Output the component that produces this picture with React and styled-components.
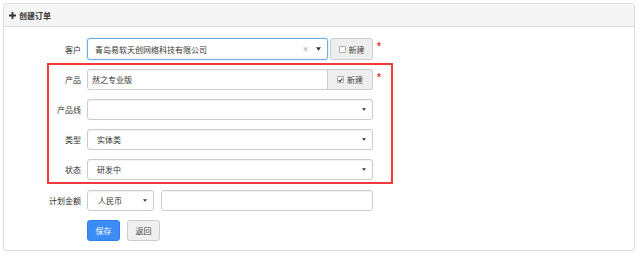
import React from "react";
import styled, { createGlobalStyle } from "styled-components";

const Global = createGlobalStyle`
  html, body { margin: 0; padding: 0; background: #fff; }
  body {
    font-family: "Noto Sans CJK SC", "Noto Sans", sans-serif;
    font-size: 8px;
    color: #333;
  }
  * { box-sizing: border-box; }
`;

const Page = styled.div`
  padding: 3px;
`;

const Panel = styled.div`
  width: 632px;
  height: 248px;
  border: 1px solid #dddddd;
  border-radius: 3px;
  background: #fff;
`;

const Header = styled.div`
  height: 23px;
  display: flex;
  align-items: center;
  gap: 3px;
  padding-left: 5px;
  background: #f5f5f5;
  border-bottom: 1px solid #dddddd;
  font-weight: bold;
  color: #333;
`;

const Body = styled.div`
  padding: 11px 0 10px 43px;
  display: flex;
  flex-direction: column;
`;

const Row = styled.div`
  display: flex;
  align-items: center;
  height: ${(p) => p.$h || 21}px;
  padding-left: ${(p) => (p.$outside ? 2 : 0)}px;
  margin-top: ${(p) => p.$mt || 0}px;
`;

const Group = styled.div`
  margin-top: 3px;
  width: 346px;
  border: 2px solid #f2393b;
  padding: 4px 0 2px 0;
  display: flex;
  flex-direction: column;
  gap: 9px;
`;

const Label = styled.div`
  width: 32px;
  flex-shrink: 0;
  margin-right: 6px;
  text-align: right;
  color: #333;
`;

const Field = styled.div`
  width: ${(p) => p.$w}px;
  height: 100%;
  display: flex;
  align-items: center;
  justify-content: space-between;
  padding: 0 ${(p) => p.$pr || 6}px 0 ${(p) => p.$pl || 9}px;
  border: 1px solid ${(p) => (p.$focus ? "#66afe9" : "#cccccc")};
  border-radius: ${(p) => p.$radius || "3px"};
  background: #fff;
  margin-left: ${(p) => p.$ml || 0}px;
  box-shadow: ${(p) =>
    p.$focus ? "0 0 2px rgba(102,175,233,0.6)" : "inset 0 1px 1px rgba(0,0,0,0.05)"};
  color: #333;
`;

const Tools = styled.div`
  display: flex;
  align-items: center;
  gap: 7px;
`;

const Clear = styled.span`
  color: #aaa;
  font-family: "DejaVu Sans", sans-serif;
  font-size: 8px;
`;

const Addon = styled.div`
  width: ${(p) => p.$w}px;
  height: 100%;
  margin-left: ${(p) => p.$ml || 0}px;
  display: flex;
  align-items: center;
  justify-content: center;
  gap: 3px;
  background: #eeeeee;
  border: 1px solid #cccccc;
  border-left: ${(p) => (p.$attached ? "none" : "1px solid #cccccc")};
  border-radius: ${(p) => (p.$attached ? "0 3px 3px 0" : "3px")};
  color: #444;
`;

const Check = styled.span`
  width: 7px;
  height: 7px;
  border: 1px solid #a9a9a9;
  border-radius: 1px;
  background: #fff;
  display: inline-flex;
  align-items: center;
  justify-content: center;
`;

const Star = styled.span`
  color: #e8363a;
  margin-left: 4px;
  align-self: flex-start;
  margin-top: 4px;
  font-family: "Liberation Sans", sans-serif;
  font-size: 10px;
  font-weight: bold;
  line-height: 10px;
`;

const Btn = styled.div`
  width: 33px;
  height: 21px;
  margin-left: ${(p) => p.$ml || 0}px;
  display: flex;
  align-items: center;
  justify-content: center;
  border-radius: 3px;
  border: 1px solid ${(p) => (p.$primary ? "#2f7fe8" : "#cccccc")};
  background: ${(p) => (p.$primary ? "#3d8cf5" : "#f0f0f0")};
  color: ${(p) => (p.$primary ? "#fff" : "#444")};
`;

const Caret = ({ size = 5 }) => (
  <svg width={size} height={size - 1} viewBox="0 0 6 4">
    <path d="M0 0 L6 0 L3 4 Z" fill="#333" />
  </svg>
);

const Tick = () => (
  <svg width="6" height="6" viewBox="0 0 6 6">
    <path d="M0.8 3.2 L2.4 4.8 L5.3 1.2" fill="none" stroke="#333" strokeWidth="1.3" />
  </svg>
);

export default function App() {
  return (
    <>
      <Global />
      <Page>
        <Panel>
          <Header>
            <svg width="7" height="7" viewBox="0 0 7 7">
              <path d="M3.5 0 V7 M0 3.5 H7" stroke="#333" strokeWidth="1.8" />
            </svg>
            <span>创建订单</span>
          </Header>
          <Body>
            <Row $outside $h={22}>
              <Label>客户</Label>
              <Field $w={241} $focus $pl={7} $pr={6}>
                <span>青岛易软天创网络科技有限公司</span>
                <Tools>
                  <Clear>×</Clear>
                  <Caret />
                </Tools>
              </Field>
              <Addon $w={43} $ml={2}>
                <Check />
                <span>新建</span>
              </Addon>
              <Star>*</Star>
            </Row>
            <Group>
              <Row>
                <Label>产品</Label>
                <Field $w={241} $radius="3px 0 0 3px" $pl={4}>
                  <span>然之专业版</span>
                </Field>
                <Addon $w={45} $attached>
                  <Check>
                    <Tick />
                  </Check>
                  <span>新建</span>
                </Addon>
                <Star>*</Star>
              </Row>
              <Row>
                <Label>产品线</Label>
                <Field $w={286}>
                  <span />
                  <Caret size={4} />
                </Field>
              </Row>
              <Row>
                <Label>类型</Label>
                <Field $w={286}>
                  <span>实体类</span>
                  <Caret size={4} />
                </Field>
              </Row>
              <Row>
                <Label>状态</Label>
                <Field $w={286}>
                  <span>研发中</span>
                  <Caret size={4} />
                </Field>
              </Row>
            </Group>
            <Row $outside $mt={6}>
              <Label>计划金额</Label>
              <Field $w={67} $pl={10}>
                <span>人民币</span>
                <Caret size={4} />
              </Field>
              <Field $w={212} $ml={7} />
            </Row>
            <Row $outside $mt={9}>
              <Label />
              <Btn $primary>保存</Btn>
              <Btn $ml={7}>返回</Btn>
            </Row>
          </Body>
        </Panel>
      </Page>
    </>
  );
}
